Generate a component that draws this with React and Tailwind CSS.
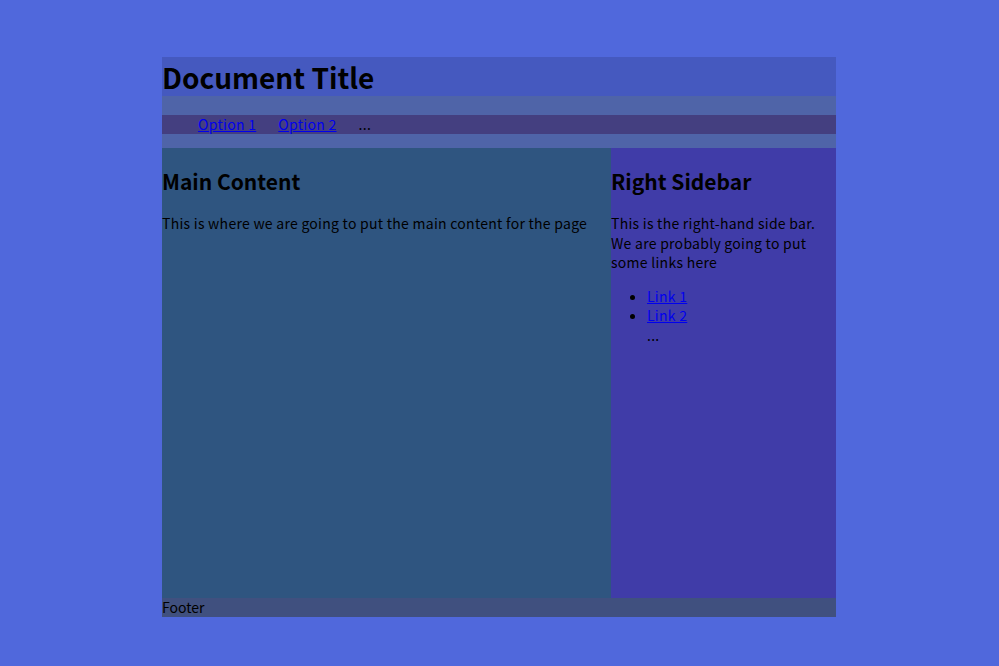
export default function App() {
  return (
    <div className="min-h-[666px] bg-[#5068dc] pt-[57px] font-['Noto_Sans_CJK_KR','Noto_Sans',sans-serif] text-black">
      <div className="ml-[162px] w-[674px]">
        <header className="h-[39px] bg-[#4559bf]">
          <h1 className="text-[28px] font-bold leading-[41px]">Document Title</h1>
        </header>
        <nav className="bg-[#4f64a8] pt-[19px] pb-[14px]">
          <ul className="flex h-[19px] items-center gap-[22px] bg-[#443f80] pl-[36px] text-[14px] leading-[19px] tracking-[0.3px]">
            <li><a href="#" className="text-[#0000ee] underline">Option 1</a></li>
            <li><a href="#" className="text-[#0000ee] underline">Option 2</a></li>
            <li>...</li>
          </ul>
        </nav>
        <div className="flex h-[450px]">
          <main className="w-[449px] bg-[#2f5580]">
            <h2 className="mt-[19px] text-[21px] font-bold leading-[28px]">Main Content</h2>
            <p className="mt-[18px] text-[14px] leading-[20px] tracking-[0.27px]">This is where we are going to put the main content for the page</p>
          </main>
          <aside className="flex-1 bg-[#403ca8]">
            <h2 className="mt-[19px] text-[21px] font-bold leading-[28px]">Right Sidebar</h2>
            <p className="mt-[19px] text-[14px] leading-[19.5px] tracking-[0.27px]">This is the right-hand side bar. We are probably going to put some links here</p>
            <ul className="mt-[14px] list-disc pl-[36px] text-[14px] leading-[19.5px] tracking-[0.27px]">
              <li><a href="#" className="text-[#0000ee] underline">Link 1</a></li>
              <li><a href="#" className="text-[#0000ee] underline">Link 2</a></li>
              <li className="list-none">...</li>
            </ul>
          </aside>
        </div>
        <footer className="h-[19px] bg-[#40507f] text-[14px] leading-[19px]">Footer</footer>
      </div>
    </div>
  );
}
